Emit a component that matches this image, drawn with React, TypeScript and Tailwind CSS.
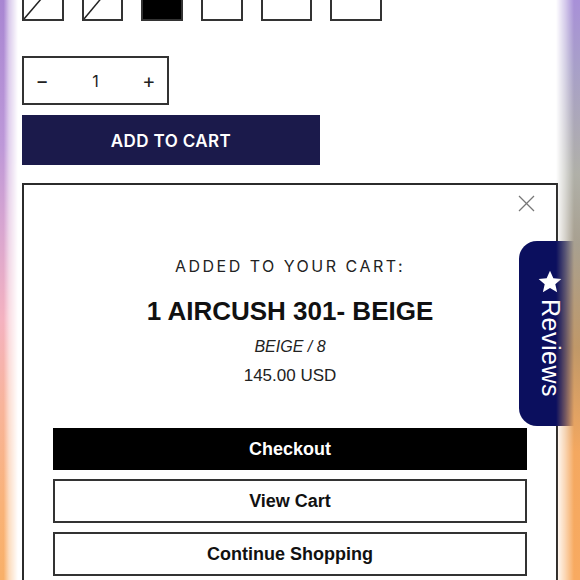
import React from "react";

function Swatch({ label, w, selected, sold }: { label: string; w: string; selected?: boolean; sold?: boolean }) {
  return (
    <div
      className={`relative ${w} h-[56px] border-2 border-[#333] flex items-end justify-center pb-[16px] text-[15px] leading-[18px] ${
        selected ? "bg-black text-white" : "bg-white text-[#222]"
      }`}
    >
      <span>{label}</span>
      {sold && (
        <svg className="absolute inset-0 w-full h-full" viewBox="0 0 40 56" preserveAspectRatio="none">
          <line x1="0" y1="56" x2="40" y2="8" stroke="#222" strokeWidth="1.6" />
        </svg>
      )}
    </div>
  );
}

export default function App() {
  return (
    <div className="relative w-[580px] h-[580px] overflow-hidden bg-white font-['Liberation_Sans',Arial,sans-serif] text-black">
      <div className="px-[22px]">
        {/* swatches */}
        <div className="flex gap-[18px] mt-[-35px]">
          <Swatch label="6" w="w-[42px]" sold />
          <Swatch label="7" w="w-[41px]" sold />
          <Swatch label="8" w="w-[42px]" selected />
          <Swatch label="9" w="w-[42px]" />
          <Swatch label="10" w="w-[51px]" />
          <Swatch label="11" w="w-[52px]" />
        </div>

        {/* quantity */}
        <div className="mt-[35px] w-[147px] h-[49px] border-2 border-[#333] flex items-center justify-between px-[10px] font-['Inter',sans-serif] text-[#222]">
          <span className="text-[20px] leading-none w-[16px] text-center">−</span>
          <span className="text-[16px] leading-none">1</span>
          <span className="text-[20px] leading-none w-[16px] text-center">+</span>
        </div>

        {/* add to cart */}
        <div className="mt-[10px] w-[298px] h-[50px] bg-[#1b1a4b] flex items-center justify-center pt-[3px] text-white font-['Inter',sans-serif] font-semibold text-[17px] tracking-[0.4px]">
          ADD TO CART
        </div>

        {/* modal */}
        <div className="relative mt-[18px] w-[536px] h-[420px] border-2 border-[#2b2b2b] bg-white px-[29px]">
          <svg className="absolute right-[21px] top-[10px] w-[17px] h-[17px]" viewBox="0 0 17 17">
            <line x1="1" y1="1" x2="16" y2="16" stroke="#777" strokeWidth="1.2" />
            <line x1="16" y1="1" x2="1" y2="16" stroke="#777" strokeWidth="1.2" />
          </svg>
          <div className="pt-[71px] flex flex-col items-center">
            <div className="font-['Inter',sans-serif] text-[16px] tracking-[2.5px] text-[#222] leading-[20px]">
              ADDED TO YOUR CART:
            </div>
            <div className="mt-[21px] text-[26px] font-bold leading-[28px] text-[#111]">
              1 AIRCUSH 301- BEIGE
            </div>
            <div className="mt-[12px] text-[16px] italic leading-[20px] text-[#222]">BEIGE / 8</div>
            <div className="mt-[9px] text-[17px] leading-[20px] text-[#222]">145.00 USD</div>
          </div>
          <div className="mt-[42px] flex flex-col gap-[9px]">
            <div className="h-[42px] bg-black flex items-center justify-center text-white font-bold text-[18px]">
              Checkout
            </div>
            <div className="h-[44px] border-2 border-[#333] flex items-center justify-center font-bold text-[18px] text-[#111]">
              View Cart
            </div>
            <div className="h-[44px] border-2 border-[#333] flex items-center justify-center font-bold text-[18px] text-[#111]">
              Continue Shopping
            </div>
          </div>
        </div>
      </div>

      {/* reviews tab */}
      <div className="absolute left-[519px] top-[241px] w-[70px] h-[185px] bg-[#0b0f5e] rounded-l-[18px] flex flex-col items-center pt-[28px] pr-[8px] text-white">
        <svg className="w-[26px] h-[26px]" viewBox="0 0 24 24">
          <path d="M12 1.5l3.1 7.1 7.4.6-5.6 4.9 1.7 7.4L12 17.6l-6.6 3.9 1.7-7.4L1.5 9.2l7.4-.6z" fill="white" />
        </svg>
        <div className="mt-[4px] [writing-mode:vertical-rl] text-[25px] leading-none tracking-[0.5px]">Reviews</div>
      </div>

      {/* edge glows */}
      <div className="pointer-events-none absolute left-0 top-0 h-full w-[18px] bg-[linear-gradient(to_bottom,#a886d2_0%,#bd98d8_25%,#d9a6d0_40%,#f4b2c0_55%,#f8b49a_70%,#f9b276_88%,#f8b068_100%)] [mask-image:linear-gradient(to_right,black_20%,rgba(0,0,0,0.45)_50%,transparent_100%)]" />
      <div className="pointer-events-none absolute right-0 top-0 h-full w-[24px] bg-[linear-gradient(to_bottom,#a890d8_0%,#a8a0c8_12%,#b0b0a8_30%,#a8a090_42%,#c09868_60%,#f4a860_78%,#f8aa60_100%)] [mask-image:linear-gradient(to_left,black_25%,rgba(0,0,0,0.5)_60%,transparent_100%)]" />
    </div>
  );
}
